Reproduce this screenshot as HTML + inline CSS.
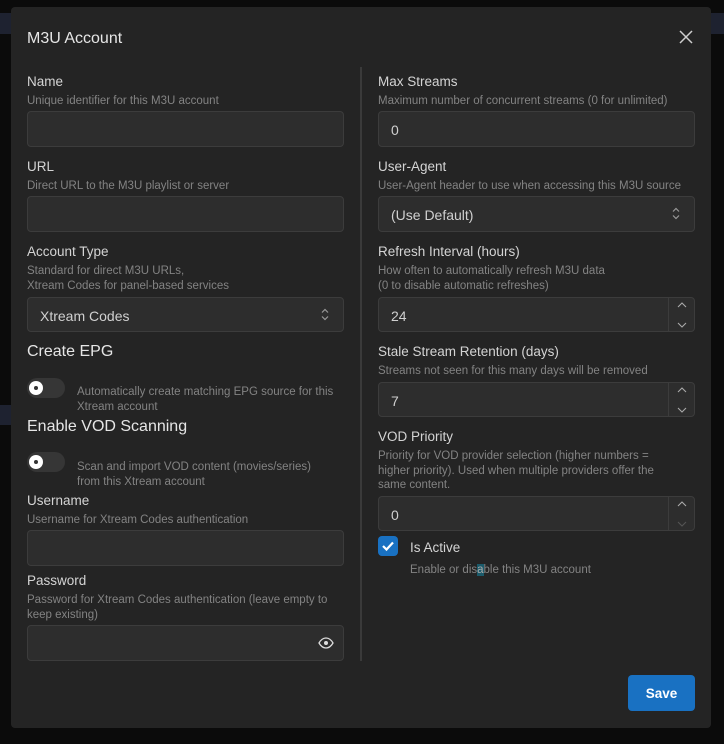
<!DOCTYPE html>
<html><head><meta charset="utf-8"><style>
*{box-sizing:border-box;margin:0;padding:0}
body{width:724px;height:744px;background:#0b0b0b;position:relative;overflow:hidden;font-family:"Liberation Sans",sans-serif}
.modal{position:absolute;left:11px;top:7px;width:700px;height:721px;background:#242424;border-radius:4px}
.a{position:absolute;white-space:nowrap}
.t{font-size:16px;color:#e6e6e6;margin-top:1px}
.l{font-size:13.5px;color:#d4d4d4;margin-top:1px}
.d{font-size:11.5px;color:#838383;line-height:14.5px;margin-top:1px}
.in{position:absolute;width:317px;height:36px;background:#2d2d2d;border:1px solid #3c3c3c;border-radius:4px;color:#d0d0d0;font-size:14px;padding:10px 12px 8px}
.h{font-size:16px;color:#e6e6e6;margin-top:1px}
.tg{position:absolute;width:38px;height:20px;border-radius:10px;background:#363636}
.tg:after{content:"";position:absolute;left:2px;top:3px;width:14px;height:14px;border-radius:50%;background:#fff}
.tg i{position:absolute;left:7px;top:8px;width:4px;height:4px;border-radius:50%;background:#333;z-index:2}
.st{position:absolute;right:0;top:0;width:26px;height:100%;border-left:1px solid #3c3c3c}
</style></head><body>
<div class="a" style="left:0;top:13px;width:11px;height:21px;background:#1e2230"></div>
<div class="a" style="left:711px;top:13px;width:13px;height:21px;background:#1e2230"></div>
<div class="a" style="left:0;top:405px;width:11px;height:20px;background:#1e2230"></div>
<div class="modal"></div>
<div class="a t" style="left:27px;top:29px">M3U Account</div>
<svg class="a" style="left:679px;top:30px" width="14" height="14" viewBox="0 0 14 14"><path d="M1 1L13 13M13 1L1 13" stroke="#cfcfcf" stroke-width="1.5"/></svg>
<div class="a" style="left:360px;top:67px;width:2px;height:594px;background:#3a3a3a"></div>

<div class="a l" style="left:27px;top:73px">Name</div>
<div class="a d" style="left:27px;top:93px">Unique identifier for this M3U account</div>
<div class="in" style="left:27px;top:111px"></div>
<div class="a l" style="left:27px;top:158px">URL</div>
<div class="a d" style="left:27px;top:178px">Direct URL to the M3U playlist or server</div>
<div class="in" style="left:27px;top:196px"></div>
<div class="a l" style="left:27px;top:243px">Account Type</div>
<div class="a d" style="left:27px;top:263px">Standard for direct M3U URLs,<br>Xtream Codes for panel-based services</div>
<div class="in" style="left:27px;top:297px;height:35px">Xtream Codes</div>
<svg class="a" style="left:321px;top:308px" width="8" height="13" viewBox="0 0 8 13"><path d="M1 4.5L4 1.5L7 4.5M1 8.5L4 11.5L7 8.5" stroke="#999" fill="none" stroke-width="1.2"/></svg>
<div class="a h" style="left:27px;top:342px">Create EPG</div>
<div class="tg" style="left:27px;top:378px"><i></i></div>
<div class="a d" style="left:77px;top:384px">Automatically create matching EPG source for this<br>Xtream account</div>
<div class="a h" style="left:27px;top:417px">Enable VOD Scanning</div>
<div class="tg" style="left:27px;top:452px"><i></i></div>
<div class="a d" style="left:77px;top:459px">Scan and import VOD content (movies/series)<br>from this Xtream account</div>
<div class="a l" style="left:27px;top:492px">Username</div>
<div class="a d" style="left:27px;top:512px">Username for Xtream Codes authentication</div>
<div class="in" style="left:27px;top:530px"></div>
<div class="a l" style="left:27px;top:572px">Password</div>
<div class="a d" style="left:27px;top:592px">Password for Xtream Codes authentication (leave empty to<br>keep existing)</div>
<div class="in" style="left:27px;top:625px"></div>
<svg class="a" style="left:318px;top:637px" width="16" height="12" viewBox="0 0 16 12"><path d="M1 6C3 2.5 5.5 1 8 1S13 2.5 15 6C13 9.5 10.5 11 8 11S3 9.5 1 6Z" stroke="#ddd" fill="none" stroke-width="1.3"/><circle cx="8" cy="6" r="2" fill="#ddd"/></svg>

<div class="a l" style="left:378px;top:73px">Max Streams</div>
<div class="a d" style="left:378px;top:93px">Maximum number of concurrent streams (0 for unlimited)</div>
<div class="in" style="left:378px;top:111px">0</div>
<div class="a l" style="left:378px;top:158px">User-Agent</div>
<div class="a d" style="left:378px;top:178px">User-Agent header to use when accessing this M3U source</div>
<div class="in" style="left:378px;top:196px">(Use Default)</div>
<svg class="a" style="left:672px;top:207px" width="8" height="13" viewBox="0 0 8 13"><path d="M1 4.5L4 1.5L7 4.5M1 8.5L4 11.5L7 8.5" stroke="#999" fill="none" stroke-width="1.2"/></svg>
<div class="a l" style="left:378px;top:243px">Refresh Interval (hours)</div>
<div class="a d" style="left:378px;top:263px">How often to automatically refresh M3U data<br>(0 to disable automatic refreshes)</div>
<div class="in" style="left:378px;top:297px;height:35px">24<div class="st"></div></div>
<div class="a l" style="left:378px;top:343px">Stale Stream Retention (days)</div>
<div class="a d" style="left:378px;top:363px">Streams not seen for this many days will be removed</div>
<div class="in" style="left:378px;top:382px;height:35px">7<div class="st"></div></div>
<div class="a l" style="left:378px;top:428px">VOD Priority</div>
<div class="a d" style="left:378px;top:448px">Priority for VOD provider selection (higher numbers =<br>higher priority). Used when multiple providers offer the<br>same content.</div>
<div class="in" style="left:378px;top:496px;height:35px">0<div class="st"></div></div>
<svg class="a" style="left:677px;top:301px" width="10" height="28" viewBox="0 0 10 28"><path d="M1 6L5 2L9 6M1 22L5 26L9 22" stroke="#aaa" fill="none" stroke-width="1.1"/></svg>
<svg class="a" style="left:677px;top:386px" width="10" height="28" viewBox="0 0 10 28"><path d="M1 6L5 2L9 6M1 22L5 26L9 22" stroke="#aaa" fill="none" stroke-width="1.1"/></svg>
<svg class="a" style="left:677px;top:500px" width="10" height="28" viewBox="0 0 10 28"><path d="M1 6L5 2L9 6" stroke="#aaa" fill="none" stroke-width="1.1"/><path d="M1 22L5 26L9 22" stroke="#555" fill="none" stroke-width="1.1"/></svg>
<div class="a" style="left:378px;top:536px;width:20px;height:20px;background:#1971c2;border-radius:4px"></div>
<svg class="a" style="left:381px;top:540px" width="14" height="12" viewBox="0 0 14 12"><path d="M2 6L5.5 9.5L12 2.5" stroke="#fff" fill="none" stroke-width="2.2"/></svg>
<div class="a l" style="left:410px;top:539px">Is Active</div>
<div class="a d" style="left:410px;top:562px">Enable or dis<span style="background:#1b5a6a;color:#aaa">a</span>ble this M3U account</div>

<div class="a" style="left:628px;top:675px;width:67px;height:36px;background:#1971c2;border-radius:4px;color:#fff;font-size:13.5px;font-weight:bold;text-align:center;line-height:38px">Save</div>
</body></html>
